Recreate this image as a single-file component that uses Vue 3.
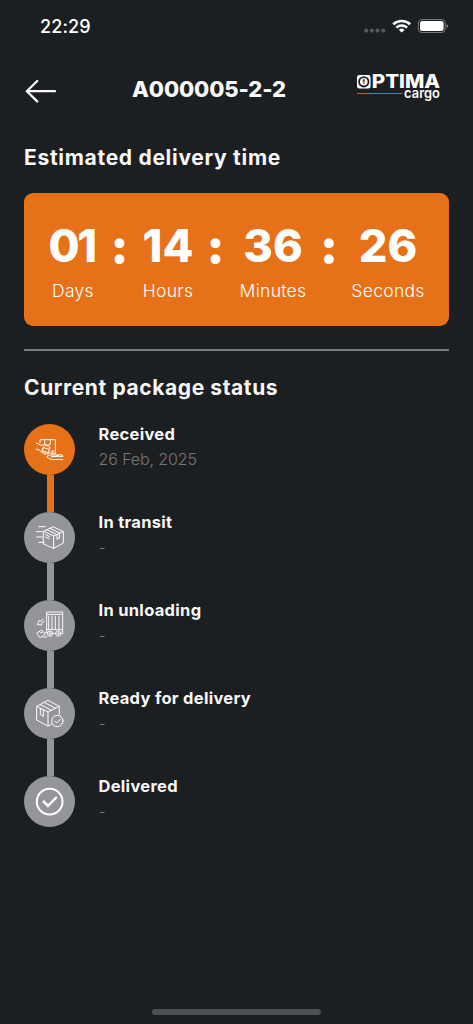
<script setup>
const units = [
  { value: '01', label: 'Days' },
  { value: '14', label: 'Hours' },
  { value: '36', label: 'Minutes' },
  { value: '26', label: 'Seconds' }
]
const steps = [
  { key: 'received', title: 'Received', date: '26 Feb, 2025', active: true },
  { key: 'transit', title: 'In transit', date: '-' },
  { key: 'unloading', title: 'In unloading', date: '-' },
  { key: 'ready', title: 'Ready for delivery', date: '-' },
  { key: 'delivered', title: 'Delivered', date: '-' }
]
</script>

<template>
  <div class="screen">
    <div class="statusbar">
      <span class="clock">22:29</span>
      <svg class="indicators" width="88" height="18" viewBox="0 0 88 18">
        <g fill="#55585a">
          <circle cx="4.2" cy="13.6" r="2.1" /><circle cx="9.9" cy="13.6" r="2.1" />
          <circle cx="15.6" cy="13.6" r="2.1" /><circle cx="21.3" cy="13.6" r="2.1" />
        </g>
        <g fill="none" stroke="#fff" stroke-width="2.6">
          <path d="M31.2 7.3a12.4 12.4 0 0 1 17 0" />
          <path d="M34.3 10.6a7.9 7.9 0 0 1 10.8 0" />
        </g>
        <path d="M36.9 12.9a4 4 0 0 1 5.6 0L39.7 15.6z" fill="#fff" />
        <rect x="56.4" y="2.5" width="26.8" height="13" rx="4" fill="none" stroke="#75787a" stroke-width="1.1" />
        <rect x="58" y="4.1" width="23.6" height="9.8" rx="2.5" fill="#fff" />
        <path d="M84.6 6.9q1.6.7 1.6 2.1t-1.6 2.1z" fill="#85888a" />
      </svg>
    </div>

    <header class="header">
      <svg class="back" width="32" height="24" viewBox="0 0 32 24" fill="none" stroke="#f8f6f6" stroke-width="2.3" stroke-linecap="round" stroke-linejoin="round">
        <path d="M31 12.2H2.8M13.2 2L2.8 12.2 13.2 22.4" />
      </svg>
      <h1 class="title">A000005-2-2</h1>
      <svg class="logo" width="84" height="28" viewBox="0 0 84 28">
        <rect x="0" y="2" width="13.6" height="13.6" rx="2.4" fill="#fff" />
        <circle cx="6.8" cy="8.8" r="4.7" fill="none" stroke="#1c1f22" stroke-width="1.8" />
        <rect x="5.8" y="6.2" width="2" height="2.5" fill="#444" />
        <rect x="5.8" y="8.7" width="2" height="2.2" fill="#e57019" />
        <text class="brand" x="14.8" y="15.4" textLength="68.3" lengthAdjust="spacingAndGlyphs">PTIMA</text>
        <path d="M0 20.5H45.5" stroke="#c4641c" stroke-width="1.2" />
        <text class="cargo" x="47.1" y="24.6" textLength="35.8" lengthAdjust="spacingAndGlyphs">cargo</text>
      </svg>
    </header>

    <h2 class="heading delivery">Estimated delivery time</h2>
    <section class="countdown">
      <template v-for="(unit, i) in units" :key="unit.label">
        <span v-if="i" class="colon">:</span>
        <div class="unit">
          <span class="value" :class="'v' + unit.value">{{ unit.value }}</span>
          <span class="label">{{ unit.label }}</span>
        </div>
      </template>
    </section>

    <hr class="divider" />

    <h2 class="heading status">Current package status</h2>
    <ol class="steps">
      <li v-for="step in steps" :key="step.key" class="step" :class="[step.key, { active: step.active }]">
        <div class="rail">
          <svg class="badge" width="51" height="51" viewBox="12 18 153 153" fill="none" stroke="#fff" stroke-linecap="round" stroke-linejoin="round">
            <g v-if="step.key === 'received'" stroke-width="3">
              <path d="M60 73V65H106V107H93M74 65v14q9 5 17 0V65M99 97v5M93 102h5" />
              <path d="M49 75l15 7 10-2 14 6 3 5-4 3-13-4M49 93l10 4 12 10 14 1 3-4-12-2-10-6 4-9M75 87l-9 8M88 94l-2 10M76 101l-10 1" />
              <path d="M81 115l8-4 22 0q6 0 5 4l-22 1M81 118l16 7 18-1 14 1M111 112l8-2q6 0 9 3M117 115l12 0" />
            </g>
            <g v-else-if="step.key === 'transit'" stroke-width="3">
              <path d="M71 76L99 62 130 77V111L101 127 71 114zM71 76l30 14 29-13M101 90v37M80 71l31 15M90 67l30 15M111 86v14l7-3V82M77 86l12 6M77 93l10 5" />
              <path d="M56 62H76M50 77H66M50 93H66M56 109H73" />
            </g>
            <g v-else-if="step.key === 'unloading'" stroke-width="2.8">
              <path d="M80 115V54h48v61M80 61h48M80 107h48M76 116h6M99 118h8M124 118h5M86 66v39M96 66v39M106 66v39M117 66v39" />
              <circle cx="90" cy="119" r="8" /><circle cx="90" cy="119" r="3" />
              <circle cx="115" cy="119" r="8" /><circle cx="115" cy="119" r="3" />
              <path d="M51 117l14-9 11 12-15 11zM58 112l5 6 5-4M69 129h12M70 76l-9 6-3-4-6 14 14 1-2-5 9-6" />
            </g>
            <g v-else-if="step.key === 'ready'" stroke-width="3">
              <path d="M94 127L84 132 50 114V73L84 55l34 18v24M50 73l34 17 34-17M84 90v42M61 68l34 17M72 61l35 18M61 79v19l9 5V83" />
              <circle cx="112" cy="117" r="17" />
              <path d="M104 117l6 6 11-11" />
            </g>
            <g v-else stroke-width="6.2">
              <circle cx="89" cy="95" r="38.5" />
              <path d="M69 93l15 15 26-27" stroke-width="7.5" stroke-linecap="butt" stroke-linejoin="miter" />
            </g>
          </svg>
        </div>
        <div class="info">
          <h3 class="name">{{ step.title }}</h3>
          <p class="date">{{ step.date }}</p>
        </div>
      </li>
    </ol>
    <div class="home"></div>
  </div>
</template>

<style>
body { background: #1c1f22; }
</style>

<style scoped>
.screen {
  box-sizing: border-box;
  width: 473px;
  height: 1024px;
  padding: 0 24px;
  background: #1c1f22;
  color: #f8f8f8;
  font-family: Inter, "Liberation Sans", sans-serif;
  display: flex;
  flex-direction: column;
  overflow: hidden;
}
h1, h2, h3, p, ol { margin: 0; padding: 0; }
.statusbar {
  height: 52px;
  flex: none;
  display: flex;
  justify-content: space-between;
  padding-left: 16px;
}
.clock { font-size: 18px; font-weight: 500; line-height: 54px; letter-spacing: 0.1px; color: #fff; }
.indicators { margin: 17px -1px 0 0; }
.header { height: 76px; flex: none; display: flex; align-items: flex-start; }
.back { margin-top: 27px; }
.title {
  width: 154px;
  margin: 22px 0 0 76px;
  font-size: 22px;
  line-height: 30px;
  font-weight: 800;
  letter-spacing: -0.13px;
  white-space: nowrap;
}
.logo { margin: 21px 0 0 71px; overflow: visible; }
.brand { font-size: 18.5px; font-weight: 800; fill: #fff; }
.cargo { font-size: 13.5px; font-weight: 600; fill: #fff; }
.heading { flex: none; font-size: 21px; line-height: 28px; font-weight: 650; letter-spacing: 0.7px; white-space: nowrap; }
.delivery { margin-top: 16px; }
.countdown {
  box-sizing: border-box;
  flex: none;
  height: 132.5px;
  margin-top: 21.3px;
  padding: 25px 21px 0 24px;
  width: 425px;
  background: #e67119;
  border-radius: 9px;
  display: grid;
  grid-template-columns: 50px 43px 54px 41px 74px 38px 80px;
  color: #fff;
}
.unit { display: flex; flex-direction: column; align-items: center; }
.value, .colon { font-size: 45px; line-height: 56px; font-weight: 850; white-space: nowrap; }
.v01 { letter-spacing: -2.5px; margin-right: 3px; }
.colon { text-align: center; font-weight: 900; font-size: 48px; }
.label { margin-top: 5px; font-size: 17.5px; line-height: 24px; font-weight: 300; letter-spacing: 0.3px; }
.divider { flex: none; width: 425px; height: 1.5px; margin: 23.7px 0 0; border: 0; background: #77797c; }
.status { margin-top: 23px; letter-spacing: 0.6px; }
.steps { list-style: none; margin-top: 22px; }
.step { height: 88px; display: flex; }
.rail { width: 51px; display: flex; flex-direction: column; align-items: center; }
.badge { flex: none; border-radius: 50%; background: #949599; }
.rail::after { content: ""; width: 7px; height: 37px; margin-left: 1px; background: #949599; }
.active .badge, .active .rail::after { background: #e67119; }
.step:last-child .rail::after { display: none; }
.info { padding-left: 23.5px; margin-top: -1px; }
.name { font-size: 16.5px; line-height: 22px; font-weight: 650; letter-spacing: 0.3px; white-space: nowrap; }
.date { margin-top: 3px; font-size: 16px; line-height: 22px; font-weight: 300; letter-spacing: -0.1px; color: #747678; }
.home { flex: none; width: 169px; height: 6px; margin: auto auto 9.5px 128px; border-radius: 3px; background: #4d5053; }
</style>
